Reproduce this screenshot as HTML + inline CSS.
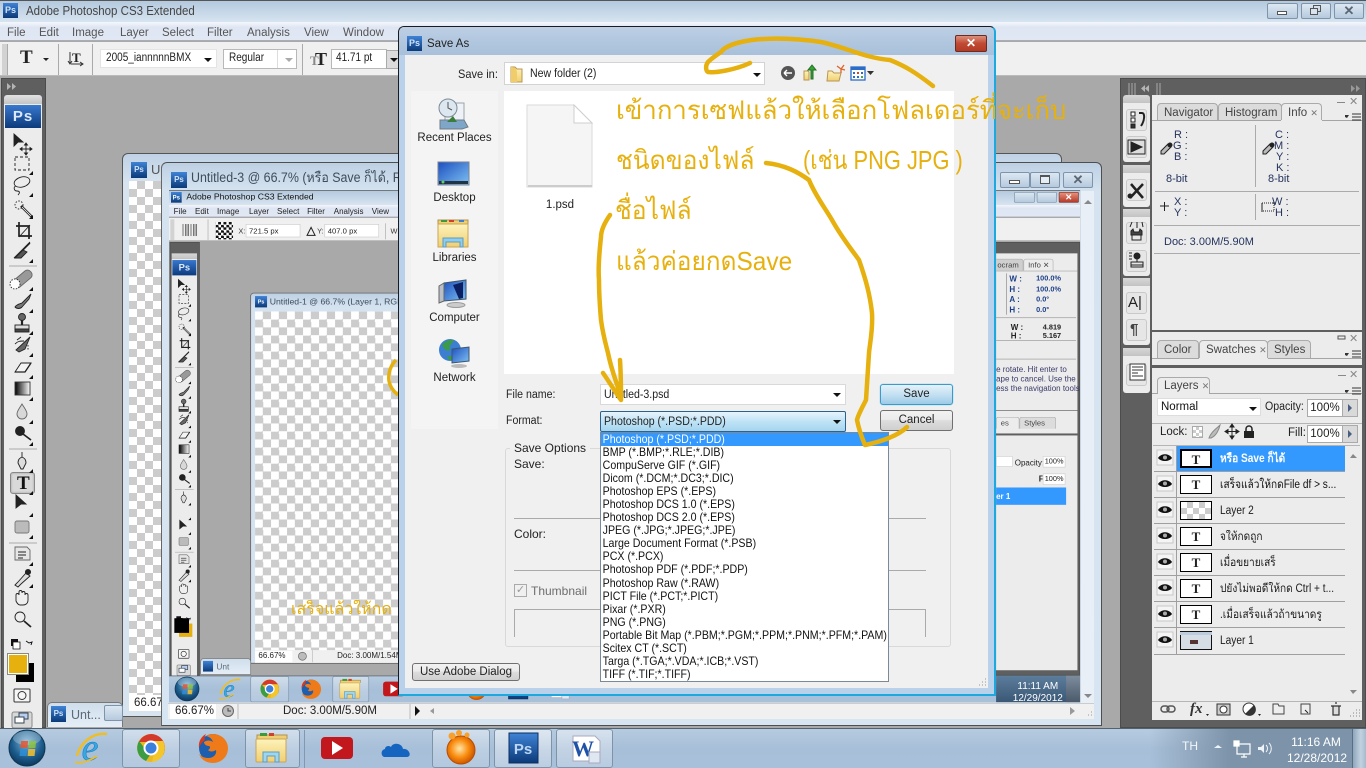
<!DOCTYPE html>
<html lang="en"><head><meta charset="utf-8"><title>Adobe Photoshop CS3 Extended</title>
<style>
*{box-sizing:border-box}
html,body{margin:0;padding:0;width:1366px;height:768px;overflow:hidden;background:#a9a9a9;font:12px/14px "Liberation Sans","Noto Sans CJK SC",sans-serif;color:#222}
.a{position:absolute;white-space:nowrap}
.sx{transform:scaleX(.92);transform-origin:0 50%}
.sy{transform:scaleX(.87);transform-origin:0 50%}
svg.f{position:absolute;left:0;top:0;width:1366px;height:768px;overflow:visible}
.title{left:0;top:0;width:1366px;height:22px;background:linear-gradient(#b4c9de,#d7e4f0);border-top:1px solid #555}
.menu{left:0;top:22px;width:1366px;height:19px;background:linear-gradient(#f4f7fc 0,#dfe6f3 30%,#e1e8f4 100%);border-bottom:1px solid #a9aeb6;color:#555}
.opt{left:0;top:42px;width:1366px;height:34px;background:#f0f0f0;border-bottom:1px solid #bbb}
.wsp{left:0;top:76px;width:1366px;height:652px;background:#a9a9a9}
.inp{background:#fff;border:1px solid #cfcfcf}
.sep{width:1px;background:#aaa}
.tbx{background:linear-gradient(90deg,rgba(125,147,169,0) 1150px,#7d93a9 1230px),linear-gradient(#b6cbe0,#a7bfd8 50%,#a9c0da);left:0;top:728px;width:1366px;height:40px;border-top:1px solid #53626f}
.tbtn{top:729px;height:39px;border:1px solid #7f93a8;border-radius:3px;background:linear-gradient(rgba(255,255,255,.38),rgba(255,255,255,.12))}
.wb{top:3px;height:16px;border:1px solid #7e94aa;border-radius:2px;background:linear-gradient(#dce7f2,#b6cade)}
.dock{left:1120px;top:78px;width:246px;height:650px;background:#5f5f5f;border:1px solid #4c4c4c}
.pan{background:#ececec}
.tab{height:18px;border:1px solid #aaa;border-bottom:0;border-radius:4px 4px 0 0;background:#dcdcdc;color:#444;padding:2px 6px 0;font-size:11.5px}
.tab.on{background:#ececec;color:#444}
.strip{left:1123px;width:27px;background:#ececec;border-radius:0 0 3px 3px}
.grip{left:1123px;width:27px;height:8px;background:linear-gradient(#d7d7d7,#c3c3c3)}
.ibtn{left:1126px;width:21px;height:22px;background:#e6e6e6;border:1px solid #c9c9c9;border-radius:3px}
.row{left:1154px;width:191px;height:26px;border-bottom:1px solid #9f9f9f}
.th{left:1180px;width:32px;height:19px;background:#fff;border:1px solid #000;text-align:center;font:bold 13px/17px "Liberation Serif",serif;color:#222}
.lt{left:1220px;color:#1c1c1c;font-size:11.5px;transform:scaleX(.88);transform-origin:0 50%}
.lab{color:#333;font-size:11px}
.btn{border:1px solid #707070;border-radius:3px;background:linear-gradient(#f2f2f2 0,#ebebeb 45%,#ddd 50%,#cfcfcf 100%);text-align:center;color:#222}
.list div{height:13.05px;line-height:13px;padding-left:3px;font-size:12px;transform:scaleX(.885);transform-origin:0 50%;color:#111}
.yt{color:#e6b00e;font-size:26px;line-height:30px;font-family:"Liberation Sans","DejaVu Sans",sans-serif}
.chk{background-color:#fff;background-image:repeating-conic-gradient(#ccc 0 25%,#fff 0 50%);background-size:16px 16px}
.chki{background-color:#fff;background-image:repeating-conic-gradient(#ccc 0 25%,#fff 0 50%);background-size:24px 24px}
.inf{font:11px/11px "Liberation Sans";color:#24345e}
</style></head><body>

<svg width="0" height="0" style="position:absolute"><defs>
<linearGradient id="psb" x1="0" y1="0" x2="0" y2="1"><stop offset="0" stop-color="#3f83d6"/><stop offset="1" stop-color="#0b3a78"/></linearGradient>
<linearGradient id="fold" x1="0" y1="0" x2="0" y2="1"><stop offset="0" stop-color="#fdf3bb"/><stop offset="1" stop-color="#f0cf72"/></linearGradient>
<linearGradient id="scr" x1="0" y1="0" x2="1" y2="1"><stop offset="0" stop-color="#1c4fc0"/><stop offset="1" stop-color="#7fc2f2"/></linearGradient>
<linearGradient id="gr" x1="0" y1="0" x2="1" y2="0"><stop offset="0" stop-color="#000"/><stop offset="1" stop-color="#fff"/></linearGradient>
<radialGradient id="orb" cx=".5" cy=".35" r=".7"><stop offset="0" stop-color="#7fb5d8"/><stop offset=".6" stop-color="#1c5c8c"/><stop offset="1" stop-color="#0a2f52"/></radialGradient>
<radialGradient id="gom" cx=".45" cy=".45" r=".6"><stop offset="0" stop-color="#ffe6a8"/><stop offset=".55" stop-color="#f98a0c"/><stop offset="1" stop-color="#c14e00"/></radialGradient>

<symbol id="tools" viewBox="0 0 60 768" width="60" height="768">
 <g fill="none" stroke="#222" stroke-width=".9">
  <path d="M14 134v12l4-4h5z" fill="#222"/><path d="M26 144v10M21 149h10" /><path d="M26 143l-1.500 2h3zM26 155l-1.500-2h3zM20 149l2-1.500v3zM32 149l-2-1.500v3z" fill="#111"/>
  <rect x="15" y="157" width="14" height="13" stroke-dasharray="3 2"/>
  <ellipse cx="22" cy="182" rx="8" ry="5" transform="rotate(-15 22 182)"/><path d="M16 186c-3 1-2 5 1 5s3 2 1 4"/>
  <circle cx="19" cy="205" r="4" stroke-dasharray="1.500 1.500"/><path d="M21 206l11 11" stroke-width="2.600"/><path d="M22 207l9 9" stroke="#fff" stroke-width=".8"/>
  <path d="M19 222v14h13M16 226h13v13" stroke-width="1.700"/><path d="M19 237l11-12"/>
  <path d="M15 258l8-8 4 2-6 6z" fill="#555"/><path d="M23 250l7-7" stroke-width="1.300"/><path d="M14 258l16-16"/>
  <path d="M9 266h28" stroke="#aaa"/>
  <g transform="rotate(-40 22 280)"><rect x="12" y="275" width="22" height="9" rx="4" fill="#999" stroke="#666"/></g><circle cx="15" cy="284" r="5" stroke-dasharray="1.400 1.400" fill="#fff"/>
  <path d="M15 307c2-3 5-3 7-4l9-9-2 5-7 8c-2 2-5 2-7 0z" fill="#777"/>
  <circle cx="22" cy="317" r="3.500" fill="#666"/><path d="M22 320v5" stroke-width="2.200"/><rect x="15" y="325" width="14" height="4" fill="#ddd"/><rect x="15" y="329" width="14" height="3" fill="#444"/>
  <path d="M16 350l14-13-5 12-6 3z" fill="#666"/><path d="M17 340l4-3M15 344c3-3 5-3 9-3"/><path d="M28 345v5" stroke-dasharray="1.500 1.500"/>
  <path d="M15 372l6-9h10l-6 9z" fill="#f4f4f4"/><path d="M15 372h10l6-9" stroke-width="1.300"/>
  <rect x="15" y="382" width="15" height="13" fill="url(#gr)" stroke="#333"/>
  <path d="M22 404c-3 5-5 7-5 10a5 5 0 0 0 10 0c0-3-2-5-5-10z" fill="#d8d8d8" stroke="#666"/>
  <circle cx="20" cy="431" r="4.500" fill="#222"/><path d="M23 434l8 6" stroke-width="1.700"/>
  <path d="M9 449h28" stroke="#aaa"/>
  <path d="M22 452v5M18 463c0-4 2-5 4-6 2 1 4 2 4 6l-3 6h-2z" fill="#ddd"/>
  <path d="M16 508l0-13 10 9-5 0z" fill="#222"/>
  <rect x="15" y="521" width="14" height="12" rx="2" fill="#bbb" stroke="#777"/>
  <path d="M9 543h28" stroke="#aaa"/>
  <path d="M15 547h12l3 3v10H15z" fill="#e6e6e6" stroke="#666"/><path d="M18 552h8M18 555h8M18 558h5"/>
  <path d="M15 585l3-3 8-9 4 3-9 8-3 3z" fill="#ddd"/><circle cx="28" cy="572" r="2.600" fill="#222"/>
  <path d="M16 601v-6c0-2 3-2 3 0v-3c0-2 3-2 3 0v1c0-2 3-2 3 0v2c0-2 3-2 3 0v5c0 4-3 5-5 5h-3c-2 0-3-2-4-4z" fill="#eee"/>
  <circle cx="20" cy="617" r="5" fill="#eee"/><path d="M24 621l7 6" stroke-width="1.800"/>
 </g>
 <g fill="#111"><path d="M33 171v4h-4z"/><path d="M33 193v4h-4z"/><path d="M33 215v4h-4z"/><path d="M33 259v4h-4z"/><path d="M33 287v4h-4z"/><path d="M33 309v4h-4z"/><path d="M33 331v4h-4z"/><path d="M33 353v4h-4z"/><path d="M33 375v4h-4z"/><path d="M33 397v4h-4z"/><path d="M33 420v4h-4z"/><path d="M33 442v4h-4z"/><path d="M33 469v4h-4z"/><path d="M33 491v4h-4z"/><path d="M33 513v4h-4z"/><path d="M33 535v4h-4z"/><path d="M33 562v4h-4z"/><path d="M33 584v4h-4z"/></g>
 <g fill="#111"><path d="M11 639h7v7h-7z"/><path d="M13 642h7v7h-7z" fill="#fff" stroke="#111" stroke-width=".8"/><path d="M26 641l3 2 3-1-1 3" fill="none" stroke="#111"/></g>
 <rect x="14" y="689" width="16" height="13" rx="1" fill="#f6f6f6" stroke="#333"/><circle cx="22" cy="695.500" r="4" fill="none" stroke="#333"/>
 <rect x="12" y="712" width="20" height="16" rx="2" fill="#d8d8d8" stroke="#888"/><rect x="19" y="713" width="9" height="6" fill="#b8cff0" stroke="#345"/><rect x="15" y="717" width="9" height="6" fill="#fff" stroke="#345"/>
</symbol>

<symbol id="task" viewBox="0 0 660 768" width="660" height="768">
 <circle cx="27" cy="748" r="18" fill="url(#orb)" stroke="#0e3552"/><ellipse cx="27" cy="738" rx="14" ry="7" fill="#fff" opacity=".25"/>
 <g transform="skewX(-6) translate(78 0)" opacity=".85"><rect x="21" y="741" width="7" height="7" fill="#e8552d"/><rect x="29" y="741" width="7" height="7" fill="#8cc63f"/><rect x="21" y="749" width="7" height="7" fill="#2d8fd8"/><rect x="29" y="749" width="7" height="7" fill="#f6c22a"/></g>
 <text x="90" y="760" font-family="Liberation Serif" font-style="italic" font-size="38" text-anchor="middle" fill="#3aa8e0" stroke="#1c7fc2" stroke-width=".6">e</text>
 <path d="M77 756c3-13 16-24 30-22" fill="none" stroke="#efbe25" stroke-width="2.400"/><path d="M75 762c6 2 14-1 22-6" fill="none" stroke="#efbe25" stroke-width="1.800"/>
 <circle cx="151" cy="748" r="14" fill="#e8b923"/><path d="M151 734a14 14 0 0 1 12.100 21l-6-10.500-6-2.500H138.900A14 14 0 0 1 151 734z" fill="#d33a2c"/>
 <path d="M139 741a14 14 0 0 0 7 20l6-9-6-2z" fill="#3b9c43"/><path d="M163 741h-12l4 6-3 15a14 14 0 0 0 11-21z" fill="#f3c62c"/>
 <circle cx="151" cy="748" r="6.500" fill="#3a7fdc" stroke="#fff" stroke-width="2"/>
 <circle cx="213" cy="748" r="14" fill="#1d5fae"/><path d="M213 734c9 0 15 7 15 14 0 9-7 15-15 15-7 0-13-4-14-10 1 3 5 5 9 5 6 0 9-4 8-8-3 2-6 2-8 0 2-1 3-3 1-4-3 0-5-2-5-4 3-2 6-2 9 0-1-3-3-5-7-6 2-1 5-2 7-2z" fill="#ef7a1a"/><path d="M199 748c-1-7 3-12 7-14-1 2-2 4-1 6-3 2-5 5-6 8z" fill="#d9391b"/>
 <path d="M257 739v-4h30v4" fill="#f0cf72" stroke="#b09050"/><rect x="260" y="733" width="7" height="3" fill="#3c9a3a"/><rect x="269" y="733" width="5" height="3" fill="#d0402a"/>
 <rect x="256" y="739" width="30" height="23" rx="1" fill="url(#fold)" stroke="#c9a558"/><path d="M263 762v-10h16v10h-4v-6h-8v6z" fill="#9fd6ef" stroke="#5f9cc0"/>
 <rect x="321" y="737" width="32" height="22" rx="4" fill="#c2171c"/><path d="M332 741v14l11-7z" fill="#fff"/>
 <path d="M385 757c-4 0-5-7 0-8 0-3 4-4 6-2 2-5 11-4 12 2 6-1 10 8 3 8z" fill="#1464c0"/>
 <circle cx="461" cy="750" r="14" fill="url(#gom)" stroke="#b94d00"/><circle cx="452" cy="736" r="3.500" fill="#f9a02a"/><circle cx="459" cy="733" r="3" fill="#f9a02a"/><circle cx="467" cy="735" r="2.500" fill="#f9a02a"/>
 <rect x="509" y="733" width="29" height="30" fill="url(#psb)" stroke="#0c2f60"/>
 <text x="523" y="754" font-family="Liberation Sans" font-weight="bold" font-size="15" fill="#bcd6f4" text-anchor="middle">Ps</text>
 <path d="M573 736h22l5 5v20h-27z" fill="#fff" stroke="#aab"/><text x="583" y="756" font-family="Liberation Serif" font-weight="bold" font-size="22" fill="#1f52a8" text-anchor="middle">W</text><path d="M589 752h11v11h-11z" fill="#dfe7f2" stroke="#aab"/>
</symbol>
</defs></svg>

<!-- MAIN APP -->
<div class="a title"></div>
<div class="a" style="left:3px;top:3px;width:15px;height:15px;background:linear-gradient(#3f83d6,#0b3a78);color:#cfe2f8;font:bold 9px/15px 'Liberation Sans';text-align:center">Ps</div>
<div class="a sx" style="left:26px;top:4px;color:#444;font-size:12.5px">Adobe Photoshop CS3 Extended</div>
<div class="a wb" style="left:1267px;width:31px"></div><div class="a" style="left:1277px;top:11px;width:10px;height:4px;border:1px solid #555;background:#fff"></div>
<div class="a wb" style="left:1301px;width:30px"></div><div class="a" style="left:1313px;top:5px;width:8px;height:7px;border:1px solid #555"></div><div class="a" style="left:1310px;top:8px;width:8px;height:7px;border:1px solid #555;background:#d8e3ef"></div>
<div class="a wb" style="left:1334px;width:30px;text-align:center;font:bold 13px/13px 'Liberation Sans';color:#5b6673">✕</div>

<div class="a menu"></div>
<div class="a" style="left:7px;top:26px;color:#555;font-size:11.5px">File</div>
<div class="a" style="left:39px;top:26px;color:#555;font-size:11.5px">Edit</div>
<div class="a" style="left:72px;top:26px;color:#555;font-size:11.5px">Image</div>
<div class="a" style="left:120px;top:26px;color:#555;font-size:11.5px">Layer</div>
<div class="a" style="left:162px;top:26px;color:#555;font-size:11.5px">Select</div>
<div class="a" style="left:207px;top:26px;color:#555;font-size:11.5px">Filter</div>
<div class="a" style="left:247px;top:26px;color:#555;font-size:11.5px">Analysis</div>
<div class="a" style="left:304px;top:26px;color:#555;font-size:11.5px">View</div>
<div class="a" style="left:343px;top:26px;color:#555;font-size:11.5px">Window</div>

<div class="a opt"></div>
<div class="a" style="left:2px;top:44px;width:6px;height:31px;background:#d2d2d2;border-right:1px solid #aaa"></div>
<div class="a" style="left:20px;top:46px;font:bold 19px/24px 'Liberation Serif',serif;color:#222">T</div>
<div class="a" style="left:43px;top:58px;border:3px solid transparent;border-top:3px solid #222"></div>
<div class="a sep" style="left:58px;top:44px;height:31px"></div>
<div class="a" style="left:72px;top:51px;font:bold 13px/14px 'Liberation Serif',serif;color:#222">T</div>
<svg class="f"><path d="M70 52v12M68 61l2 3 2-3M71 64h12M80 62l3 2-3 2" fill="none" stroke="#333"/></svg>
<div class="a sep" style="left:92px;top:44px;height:31px"></div>
<div class="a inp" style="left:100px;top:49px;width:117px;height:19px;border-color:#e4e4e4"></div>
<div class="a sy" style="left:106px;top:51px;font-size:11.5px;color:#222">2005_iannnnnBMX</div>
<div class="a" style="left:204px;top:58px;border:4px solid transparent;border-top:4px solid #111"></div>
<div class="a inp" style="left:223px;top:49px;width:74px;height:20px;border-color:#b8b8b8"></div>
<div class="a sy" style="left:229px;top:51px;font-size:11.5px;color:#222">Regular</div>
<div class="a" style="left:277px;top:50px;width:1px;height:18px;background:#ddd"></div>
<div class="a" style="left:285px;top:58px;border:4px solid transparent;border-top:4px solid #aaa"></div>
<div class="a sep" style="left:302px;top:44px;height:31px"></div>
<div class="a" style="left:310px;top:53px;font:bold 13px/16px 'Liberation Serif',serif;color:#888">T</div>
<div class="a" style="left:315px;top:48px;font:bold 18px/22px 'Liberation Serif',serif;color:#222">T</div>
<div class="a inp" style="left:331px;top:49px;width:56px;height:20px;border-color:#b8b8b8"></div>
<div class="a sy" style="left:336px;top:51px;font-size:11.5px">41.71 pt</div>
<div class="a" style="left:386px;top:50px;width:14px;height:19px;background:#dcdcdc;border:1px solid #aaa"></div>
<div class="a" style="left:390px;top:58px;border:4px solid transparent;border-top:4px solid #111"></div>

<div class="a wsp"></div>

<!-- window 1 behind -->
<div class="a" style="left:122px;top:153px;width:940px;height:564px;background:linear-gradient(#bfd2e4,#d7e4f0 30px);border:1px solid #555;border-radius:6px 6px 0 0"></div>
<div class="a" style="left:131px;top:162px;width:16px;height:16px;background:linear-gradient(#3f83d6,#0b3a78);color:#cfe2f8;font:bold 8px/16px 'Liberation Sans';text-align:center">Ps</div>
<div class="a" style="left:151px;top:163px;font-size:13px;color:#555">Un</div>
<div class="a chk" style="left:129px;top:181px;width:40px;height:514px"></div>
<div class="a" style="left:129px;top:695px;width:40px;height:16px;background:#fff;padding:1px 5px;font-size:11.5px;color:#222">66.67</div>
<!-- minimized tab -->
<div class="a" style="left:47px;top:702px;width:76px;height:25px;background:linear-gradient(#cfdeec,#e5eef6);border:1px solid #777;border-bottom:0;border-radius:5px 5px 0 0"></div>
<div class="a" style="left:51px;top:706px;width:15px;height:16px;background:linear-gradient(#3f83d6,#0b3a78);color:#cfe2f8;font:bold 8px/16px 'Liberation Sans';text-align:center">Ps</div>
<div class="a" style="left:71px;top:708px;color:#5a6a7a;font-size:12.5px">Unt...</div>
<div class="a wb" style="left:104px;top:705px;width:19px;height:16px"></div>

<!-- window 2 -->
<div class="a" style="left:161px;top:162px;width:941px;height:564px;background:linear-gradient(#bdd0e3,#d5e3f0 28px,#d7e4f1);border:1px solid #4e4e4e;border-radius:6px 6px 0 0;border-left-color:#666"></div>
<div class="a" style="left:171px;top:172px;width:16px;height:16px;background:linear-gradient(#3f83d6,#0b3a78);color:#cfe2f8;font:bold 8px/16px 'Liberation Sans';text-align:center">Ps</div>
<div class="a sx" style="left:191px;top:171px;font-size:13.5px;color:#3f4d5b">Untitled-3 @ 66.7% (หรือ Save ก็ได้, RGB/8)</div>
<div class="a wb" style="left:1000px;top:172px;width:30px;height:16px"></div><div class="a" style="left:1009px;top:180px;width:11px;height:4px;border:1px solid #555;background:#fff"></div>
<div class="a wb" style="left:1030px;top:172px;width:30px;height:16px"></div><div class="a" style="left:1040px;top:175px;width:10px;height:9px;border:1px solid #555;border-top-width:2px;background:#e4eef7"></div>
<div class="a wb" style="left:1063px;top:172px;width:30px;height:16px;text-align:center;font:bold 13px/13px 'Liberation Sans';color:#5b6673">✕</div>
<!-- scrollbar/status -->
<div class="a" style="left:1081px;top:191px;width:13px;height:512px;background:#e9eff6"></div>
<div class="a" style="left:1084px;top:196px;border:4px solid transparent;border-bottom:4px solid #888"></div>
<div class="a" style="left:1084px;top:694px;border:4px solid transparent;border-top:4px solid #888"></div>
<div class="a" style="left:168px;top:703px;width:926px;height:16px;background:#f0f0f0;border-top:1px solid #ccc"></div>
<div class="a" style="left:170px;top:704px;width:46px;height:15px;background:#fff;font-size:11.5px;padding-left:5px">66.67%</div>
<svg class="f"><circle cx="228" cy="711" r="5.500" fill="#bbb" stroke="#666"/><path d="M228 708v3h3" fill="none" stroke="#444"/><path d="M238 704v15M410 704v15" stroke="#bbb"/><path d="M415 706v10l5-5z" fill="#111"/><path d="M434 708v6l-4-3z" fill="#999"/><path d="M1070 707v8l5-4z" fill="#999"/><path d="M1088 715h1M1091 715h1M1091 712h1" stroke="#999"/></svg>
<div class="a" style="left:283px;top:704px;font-size:11.5px">Doc: 3.00M/5.90M</div>

<!-- inner screenshot -->
<div class="a" style="left:168.600px;top:190.300px;width:1366px;height:768px;transform:scale(.667);transform-origin:0 0;overflow:hidden;background:#a9a9a9">
 <div class="a title"></div>
 <div class="a" style="left:3px;top:3px;width:16px;height:16px;background:linear-gradient(#3f83d6,#0b3a78);color:#fff;font:bold 9px/16px 'Liberation Sans';text-align:center">Ps</div>
 <div class="a" style="left:26px;top:3px;font-size:13px;color:#111">Adobe Photoshop CS3 Extended</div>
 <div class="a wb" style="left:1267px;width:31px"></div><div class="a wb" style="left:1301px;width:30px"></div>
 <div class="a wb" style="left:1334px;width:30px;background:linear-gradient(#e8917b,#b53a2a);border-color:#7a2a20;color:#fff;text-align:center;font:bold 13px/13px 'Liberation Sans'">✕</div>
 <div class="a menu"></div>
 <div class="a" style="left:7px;top:25px;color:#222">File</div><div class="a" style="left:39px;top:25px;color:#222">Edit</div><div class="a" style="left:72px;top:25px;color:#222">Image</div><div class="a" style="left:120px;top:25px;color:#222">Layer</div><div class="a" style="left:162px;top:25px;color:#222">Select</div><div class="a" style="left:207px;top:25px;color:#222">Filter</div><div class="a" style="left:247px;top:25px;color:#222">Analysis</div><div class="a" style="left:304px;top:25px;color:#222">View</div>
 <div class="a opt"></div>
 <div class="a" style="left:2px;top:44px;width:6px;height:31px;background:#d2d2d2"></div>
 <div class="a" style="left:20px;top:51px;width:24px;height:18px;background:repeating-linear-gradient(90deg,#777 0 2px,#eee 2px 4px)"></div>
 <div class="a sep" style="left:58px;top:44px;height:31px"></div>
 <div class="a" style="left:70px;top:48px;width:26px;height:26px;background:repeating-conic-gradient(#111 0 25%,#fff 0 50%) 0 0/8px 8px"></div>
 <div class="a lab" style="left:104px;top:55px;font-size:11px">X:</div>
 <div class="a inp" style="left:115px;top:51px;width:82px;height:20px;padding:3px 4px;border-color:#ccc;font-size:11.5px">721.5 px</div>
 <svg class="f"><path d="M207 68l6-12 6 12z" fill="none" stroke="#222" stroke-width="1.500"/></svg>
 <div class="a lab" style="left:222px;top:55px">Y:</div>
 <div class="a inp" style="left:233px;top:51px;width:82px;height:20px;padding:3px 4px;border-color:#ccc;font-size:11.5px">407.0 px</div>
 <div class="a sep" style="left:324px;top:50px;height:24px"></div>
 <div class="a lab" style="left:332px;top:55px">W:</div>
 <!-- doc -->
 <div class="a" style="left:122px;top:154px;width:1140px;height:556px;background:linear-gradient(#bdd0e3,#d5e3f0 20px);border:1px solid #555;border-radius:5px 5px 0 0"></div>
 <div class="a" style="left:129px;top:159px;width:18px;height:17px;background:linear-gradient(#3f83d6,#0b3a78);color:#fff;font:bold 8px/17px 'Liberation Sans';text-align:center">Ps</div>
 <div class="a" style="left:151px;top:161px;font-size:13px;color:#3f4d5b">Untitled-1 @ 66.7% (Layer 1, RGB/8)</div>
 <div class="a chki" style="left:129px;top:182px;width:1100px;height:508px"></div>
 <div class="a" style="left:129px;top:690px;width:1100px;height:19px;background:#f0f0f0"></div>
 <div class="a" style="left:129px;top:691px;width:56px;height:17px;background:#fff;padding-left:5px;font-size:12px">66.67%</div>
 <div class="a" style="left:252px;top:691px;font-size:12px">Doc: 3.00M/1.54M</div>
 <svg class="f"><circle cx="200" cy="699" r="6" fill="#bbb" stroke="#666"/><path d="M215 690v18" stroke="#bbb"/></svg>
 <div class="a" style="left:47px;top:702px;width:76px;height:25px;background:linear-gradient(#cfdeec,#e5eef6);border:1px solid #777;border-radius:5px 5px 0 0"></div>
 <div class="a" style="left:51px;top:706px;width:15px;height:16px;background:linear-gradient(#3f83d6,#0b3a78)"></div>
 <div class="a" style="left:71px;top:708px;color:#5a6a7a;font-size:12.5px">Unt</div>
 <!-- inner toolbar -->
 <div class="a" style="left:1px;top:78px;width:45px;height:650px;background:#5f5f5f;border:1px solid #4c4c4c"></div>
 <div class="a" style="left:4px;top:95px;width:38px;height:8px;background:linear-gradient(#d7d7d7,#c3c3c3)"></div>
 <div class="a" style="left:4px;top:103px;width:38px;height:625px;background:#ececec"></div>
 <div class="a" style="left:5px;top:105px;width:36px;height:23px;background:linear-gradient(#3878ce,#0c3a7c);color:#dbe9fa;font:bold 14px/23px 'Liberation Sans';text-align:center">Ps</div>
 <svg class="f"><use href="#tools" x="0" y="0"/></svg>
 <div class="a" style="left:15px;top:650px;width:20px;height:20px;background:#e6b00e"></div>
 <div class="a" style="left:8px;top:642px;width:22px;height:22px;background:#000"></div>
 <!-- inner dock right side -->
 <div class="a dock"></div>
 <div class="a pan" style="left:1240px;top:95px;width:122px;height:235px"></div>
 <div class="a tab" style="left:1225px;top:103px;width:56px;background:#cfcfcf;padding-left:16px">ocram</div>
 <div class="a tab on" style="left:1281px;top:103px;width:45px;border-color:#aaa">Info ✕</div>
 <div class="a" style="left:1240px;top:121px;width:122px;height:1px;background:#aaa"></div>
 <div class="a" style="left:1255px;top:125px;width:1px;height:62px;background:#888"></div>
 <div class="a" style="left:1240px;top:191px;width:120px;height:1px;background:#999"></div>
 <div class="a" style="left:1240px;top:225px;width:120px;height:1px;background:#999"></div>
 <div class="a" style="left:1240px;top:253px;width:120px;height:1px;background:#999"></div>
 <div class="a" style="left:1260px;top:126px;font:bold 12px/15.500px 'Liberation Sans';color:#1c3f8a">W :<br>H :<br>A :<br>H :</div>
 <div class="a" style="left:1300px;top:126px;font:bold 11px/15.500px 'Liberation Sans';color:#1c3f8a">100.0%<br>100.0%<br>0.0°<br>0.0°</div>
 <div class="a" style="left:1262px;top:200px;font:bold 12px/13px 'Liberation Sans';color:#222">W :<br>H :</div>
 <div class="a" style="left:1310px;top:200px;font:bold 11px/13px 'Liberation Sans';color:#222">4.819<br>5.167</div>
 <div class="a" style="left:1240px;top:262px;font-size:12px;line-height:14px;color:#3a3a6a">e rotate. Hit enter to<br>ape to cancel. Use the<br>ess the navigation tools.</div>
 <div class="a pan" style="left:1240px;top:331px;width:122px;height:34px"></div>
 <div class="a tab" style="left:1240px;top:340px;width:35px;background:#ececec">es</div>
 <div class="a tab" style="left:1275px;top:340px;width:55px">Styles</div>
 <div class="a pan" style="left:1240px;top:368px;width:122px;height:352px"></div>
 <div class="a inp" style="left:1240px;top:399px;width:25px;height:16px"></div>
 <div class="a" style="left:1268px;top:402px;font-size:12px">Opacity:</div>
 <div class="a inp" style="left:1310px;top:399px;width:34px;height:17px;font-size:11px;text-align:center">100%</div>
 <div class="a" style="left:1304px;top:426px;font-size:12px;font-weight:bold">Fill:</div>
 <div class="a inp" style="left:1310px;top:425px;width:34px;height:17px;font-size:11px;text-align:center">100%</div>
 <div class="a" style="left:1240px;top:446px;width:105px;height:26px;background:#3399ff;color:#fff;font:bold 12px/26px 'Liberation Sans'">er 1</div>
 <!-- inner taskbar -->
 <div class="a tbx" style="background:linear-gradient(#b6cbe0,#a7bfd8 50%,#a9c0da)"></div>
 <div class="a tbtn" style="left:122px;width:58px"></div><div class="a tbtn" style="left:245px;width:55px"></div>
 <svg class="f"><use href="#task" x="0" y="0"/></svg>
 <div class="a" style="left:1240px;top:728px;width:126px;height:40px;background:linear-gradient(#5d7d9c,#3a5876)"></div>
 <div class="a" style="left:1265px;top:735px;color:#fff;font-size:15px;line-height:18px;text-align:center">11:11 AM<br>12/29/2012</div>
 <div class="a" style="left:1345px;top:728px;width:21px;height:40px;background:linear-gradient(#7d8d9d,#4a5a6a)"></div>
</div>
<!-- yellow bits on inner doc -->
<svg class="f"><path d="M396 360c-6 6-8 14-7 21 1 6 4 10 9 14" fill="none" stroke="#e6b00e" stroke-width="3.500"/></svg>
<div class="a" style="left:291px;top:600px;width:106px;overflow:hidden;color:#e6b00e;font-size:16px;line-height:20px">เสร็จแล้วให้กด</div>

<!-- toolbar -->
<div class="a" style="left:1px;top:78px;width:45px;height:650px;background:#5f5f5f;border:1px solid #4c4c4c"></div>
<svg class="f"><path d="M7 83v7l4-3.500zM12 83v7l4-3.500z" fill="#b4b4b4"/></svg>
<div class="a" style="left:4px;top:95px;width:38px;height:9px;background:linear-gradient(#e2e2e2,#c4c4c4);border-radius:3px 3px 0 0"></div>
<div class="a" style="left:4px;top:104px;width:38px;height:624px;background:#ececec"></div>
<div class="a" style="left:5px;top:105px;width:36px;height:23px;background:linear-gradient(#3878ce,#0c3a7c);color:#dbe9fa;font:bold 15px/23px 'Liberation Sans';text-align:center;letter-spacing:1px">Ps</div>
<div class="a" style="left:10px;top:472px;width:25px;height:22px;background:#d9d9d9;border:1px solid #888;border-radius:3px;box-shadow:inset 0 0 2px #999"></div>
<svg class="f"><use href="#tools" x="0" y="0"/></svg>
<div class="a" style="left:17px;top:473px;font:bold 19px/21px 'Liberation Serif',serif;color:#111">T</div>
<div class="a" style="left:16px;top:663px;width:18px;height:19px;background:#000"></div>
<div class="a" style="left:8px;top:654px;width:20px;height:20px;background:#e6b00e;border:1px solid #fff;outline:1px solid #888"></div>

<!-- right dock -->
<div class="a dock"></div>
<svg class="f"><path d="M1129 83v12M1132 83v12M1135 83v12M1157 83v12M1160 83v12" stroke="#aaa" stroke-width="1"/><path d="M1145 85v7l-4-3.500zM1149 85v7l-4-3.500z" fill="#b4b4b4"/><path d="M1351 85v7l4-3.500zM1356 85v7l4-3.500z" fill="#999"/></svg>
<div class="a grip" style="top:95px;border-radius:3px 3px 0 0"></div><div class="a strip" style="top:103px;height:59px"></div>
<div class="a grip" style="top:165px"></div><div class="a strip" style="top:173px;height:34px"></div>
<div class="a grip" style="top:209px"></div><div class="a strip" style="top:217px;height:59px"></div>
<div class="a grip" style="top:278px"></div><div class="a strip" style="top:286px;height:59px"></div>
<div class="a grip" style="top:348px"></div><div class="a strip" style="top:356px;height:37px"></div>
<div class="a ibtn" style="top:109px"></div><div class="a ibtn" style="top:136px"></div><div class="a ibtn" style="top:179px"></div><div class="a ibtn" style="top:222px"></div><div class="a ibtn" style="top:250px"></div><div class="a ibtn" style="top:292px"></div><div class="a ibtn" style="top:319px"></div><div class="a ibtn" style="top:364px"></div>
<svg class="f">
 <g fill="none" stroke="#222"><rect x="1131" y="112" width="4" height="4" fill="#fff"/><rect x="1131" y="118" width="4" height="4" fill="#fff"/><rect x="1131" y="124" width="4" height="4" fill="#333"/><path d="M1139 113h3c3 0 3 7-1 13" stroke-width="2"/>
 <rect x="1128" y="140" width="17" height="14" fill="#ddd"/><path d="M1131 142l11 5-11 5z" fill="#222"/>
 <path d="M1130 198l13-14M1143 198l-12-14" stroke-width="2.500"/><circle cx="1130" cy="196" r="2" fill="#222"/>
 <path d="M1131 235h11v-4l-2-2-1 3h-5l-1-3-2 2zM1130 227l2-5M1137 228v-6M1143 227l-1-5" fill="#444"/><rect x="1132" y="235" width="9" height="5"/>
 <circle cx="1137" cy="256" r="3" fill="#222"/><path d="M1137 259v3M1131 262h12v3h-12zM1131 265h12v2h-12zM1129 253h3M1129 256h3M1129 259h3"/>
 <rect x="1130" y="364" width="15" height="16" fill="#fff" stroke="#333"/><path d="M1132 367h11M1132 370h11M1132 373h6M1132 376h11" stroke="#333"/></g>
</svg>
<div class="a" style="left:1128px;top:293px;font:15px/20px 'Liberation Sans';color:#222">A|</div>
<div class="a" style="left:1130px;top:320px;font:bold 15px/20px 'Liberation Sans';color:#444">¶</div>

<div class="a pan" style="left:1152px;top:95px;width:210px;height:235px"></div>
<div class="a" style="left:1337px;top:102px;width:8px;height:1px;background:#888"></div>
<div class="a" style="left:1349px;top:95px;color:#888;font-size:11px">✕</div>
<div class="a tab" style="left:1157px;top:103px;width:61px">Navigator</div>
<div class="a tab" style="left:1218px;top:103px;width:64px">Histogram</div>
<div class="a tab on" style="left:1281px;top:103px;width:41px;padding-right:0">Info <span style="color:#777;font-size:9px">✕</span></div>
<div class="a" style="left:1152px;top:120px;width:210px;height:1px;background:#a5a5a5"></div>
<div class="a" style="left:1281px;top:120px;width:41px;height:2px;background:#ececec"></div>
<svg class="f"><path d="M1345 117v-2h4l-2 3z" fill="#333"/><path d="M1352 114h9M1352 117h9M1352 120h9" stroke="#333"/>
 <g fill="none" stroke="#222"><path d="M1161 151l7-7 3 3-7 7h-3z" fill="#bbb"/><circle cx="1170" cy="145" r="2" fill="#222"/><path d="M1263 151l7-7 3 3-7 7h-3z" fill="#bbb"/><circle cx="1272" cy="145" r="2" fill="#222"/><path d="M1160 206h9M1164.500 202v9"/><path d="M1262 203h12v8h-12z" stroke-dasharray="1 1"/><path d="M1262 203v9M1272 203h4"/></g></svg>
<div class="a" style="left:1255px;top:125px;width:1px;height:62px;background:#aaa"></div>
<div class="a" style="left:1155px;top:191px;width:204px;height:1px;background:#ababab"></div>
<div class="a" style="left:1255px;top:194px;width:1px;height:26px;background:#aaa"></div>
<div class="a" style="left:1154px;top:225px;width:206px;height:1px;background:#ababab"></div>
<div class="a" style="left:1154px;top:253px;width:206px;height:1px;background:#ababab"></div>
<div class="a inf" style="left:1174px;top:130px">R :</div>
<div class="a inf" style="left:1173px;top:141px">G :</div>
<div class="a inf" style="left:1174px;top:152px">B :</div>
<div class="a inf" style="left:1275px;top:130px">C :</div>
<div class="a inf" style="left:1274px;top:141px">M :</div>
<div class="a inf" style="left:1276px;top:152px">Y :</div>
<div class="a inf" style="left:1276px;top:163px">K :</div>
<div class="a inf" style="left:1166px;top:174px">8-bit</div>
<div class="a inf" style="left:1268px;top:174px">8-bit</div>
<div class="a inf" style="left:1174px;top:197px">X :</div>
<div class="a inf" style="left:1174px;top:208px">Y :</div>
<div class="a inf" style="left:1272px;top:197px">W :</div>
<div class="a inf" style="left:1275px;top:208px">H :</div>
<div class="a inf" style="left:1164px;top:237px">Doc: 3.00M/5.90M</div>

<div class="a pan" style="left:1152px;top:332px;width:210px;height:33px"></div>
<div class="a tab" style="left:1157px;top:340px;width:42px">Color</div>
<div class="a tab on" style="left:1199px;top:340px;width:69px;padding-right:0">Swatches <span style="color:#777;font-size:9px">✕</span></div>
<div class="a tab" style="left:1267px;top:340px;width:44px">Styles</div>
<div class="a" style="left:1152px;top:358px;width:210px;height:1px;background:#a5a5a5"></div>
<div class="a" style="left:1199px;top:358px;width:69px;height:2px;background:#ececec"></div>
<svg class="f"><path d="M1338 336h7v3h-7z" fill="none" stroke="#555"/><path d="M1345 355v-2h4l-2 3z" fill="#333"/><path d="M1352 351h9M1352 354h9M1352 357h9" stroke="#333"/></svg>
<div class="a" style="left:1349px;top:332px;color:#888;font-size:11px">✕</div>

<div class="a pan" style="left:1152px;top:368px;width:210px;height:352px"></div>
<div class="a" style="left:1338px;top:375px;width:8px;height:1px;background:#888"></div>
<div class="a" style="left:1349px;top:368px;color:#888;font-size:11px">✕</div>
<div class="a tab on" style="left:1157px;top:377px;width:53px;height:17px;padding-right:0;padding-top:1px">Layers <span style="color:#777;font-size:9px">✕</span></div>
<div class="a" style="left:1152px;top:393px;width:210px;height:1px;background:#a5a5a5"></div>
<div class="a" style="left:1158px;top:393px;width:51px;height:2px;background:#ececec"></div>
<svg class="f"><path d="M1345 392v-2h4l-2 3z" fill="#333"/><path d="M1352 388h9M1352 391h9M1352 394h9" stroke="#333"/></svg>
<div class="a inp" style="left:1157px;top:398px;width:104px;height:18px;border-color:#ddd;padding:1px 3px;font-size:11.5px;color:#111">Normal</div>
<div class="a" style="left:1249px;top:407px;border:4px solid transparent;border-top:4px solid #111"></div>
<div class="a sx" style="left:1265px;top:400px;font-size:11.5px;color:#222">Opacity:</div>
<div class="a inp" style="left:1307px;top:399px;width:36px;height:18px;border-color:#aaa;text-align:center;font-size:11.5px;color:#222;padding-top:1px">100%</div>
<div class="a" style="left:1342px;top:399px;width:16px;height:18px;background:#d9d9d9;border:1px solid #aaa"></div>
<div class="a" style="left:1348px;top:404px;border:4px solid transparent;border-left:4px solid #4a5f80;border-right:0"></div>
<div class="a" style="left:1152px;top:423px;width:210px;height:1px;background:#b5b5b5"></div>
<div class="a" style="left:1160px;top:425px;font-size:11.5px;color:#222">Lock:</div>
<div class="a" style="left:1192px;top:426px;width:11px;height:12px;background:repeating-conic-gradient(#ccc 0 25%,#fff 0 50%) 0 0/6px 6px;border:1px solid #aaa"></div>
<svg class="f"><path d="M1209 438c2-6 7-9 11-13-1 5-4 11-9 13z" fill="#bbb" stroke="#888"/><path d="M1232 425v13M1225.500 431.500h13M1232 424l-2 3h4zM1232 439l-2-3h4zM1225 431.500l3-2v4zM1239 431.500l-3-2v4z" fill="#222" stroke="#222"/><rect x="1244" y="431" width="10" height="7" fill="#222"/><path d="M1246 431v-2c0-4 6-4 6 0v2" fill="none" stroke="#222" stroke-width="1.500"/></svg>
<div class="a" style="left:1288px;top:426px;font-size:11.5px;color:#222">Fill:</div>
<div class="a inp" style="left:1307px;top:425px;width:36px;height:18px;border-color:#aaa;text-align:center;font-size:11.5px;color:#222;padding-top:1px">100%</div>
<div class="a" style="left:1342px;top:425px;width:16px;height:18px;background:#d9d9d9;border:1px solid #aaa"></div>
<div class="a" style="left:1348px;top:430px;border:4px solid transparent;border-left:4px solid #4a5f80;border-right:0"></div>
<div class="a" style="left:1153px;top:445px;width:207px;height:1px;background:#b5b5b5"></div>

<div class="a" style="left:1177px;top:446px;width:168px;height:26px;background:#3399ff"></div>
<div class="a row" style="top:446px"></div><div class="a row" style="top:472px"></div><div class="a row" style="top:498px"></div><div class="a row" style="top:524px"></div><div class="a row" style="top:550px"></div><div class="a row" style="top:576px"></div><div class="a row" style="top:602px"></div><div class="a row" style="top:628px;height:27px"></div>
<div class="a" style="left:1176px;top:446px;width:1px;height:209px;background:#9f9f9f"></div>
<svg class="f"><defs><g id="ey"><rect x="1157" y="-8" width="16" height="15" fill="#f5f5f5" stroke="#c8c8c8"/><path d="M1158 0c3-5 11-5 14 0-3 4-11 4-14 0z" fill="#111"/><circle cx="1165" cy="-.5" r="2" fill="#aaa"/></g></defs>
 <use href="#ey" y="458"/><use href="#ey" y="484"/><use href="#ey" y="510"/><use href="#ey" y="536"/><use href="#ey" y="562"/><use href="#ey" y="588"/><use href="#ey" y="614"/><use href="#ey" y="640"/>
 <path d="M1350 458l3-4 4 4z" fill="#888"/><path d="M1350 690l3 4 4-4z" fill="#888"/></svg>
<div class="a th" style="top:449px;border:2px solid #000">T</div>
<div class="a th" style="top:475px">T</div>
<div class="a" style="left:1180px;top:501px;width:32px;height:19px;border:1px solid #000;background:repeating-conic-gradient(#ccc 0 25%,#fff 0 50%) 0 0/12px 12px"></div>
<div class="a th" style="top:527px">T</div><div class="a th" style="top:553px">T</div><div class="a th" style="top:579px">T</div><div class="a th" style="top:605px">T</div>
<div class="a" style="left:1180px;top:631px;width:32px;height:19px;border:1px solid #111;background:#d7dde4"></div>
<div class="a" style="left:1190px;top:640px;width:8px;height:4px;background:#533"></div>
<div class="a" style="left:1180px;top:632px;width:32px;height:3px;background:#bcccdc"></div>

<div class="a lt" style="top:452px;color:#fff;font-weight:bold">หรือ Save ก็ได้</div>
<div class="a lt" style="top:478px;color:#111">เสร็จแล้วให้กดFile df &gt; s...</div>
<div class="a lt" style="top:504px">Layer 2</div>
<div class="a lt" style="top:530px">จให้กดถูก</div>
<div class="a lt" style="top:556px">เมื่อขยายเสร็</div>
<div class="a lt" style="top:582px">ปยังไม่พอดีให้กด Ctrl + t...</div>
<div class="a lt" style="top:608px">.เมื่อเสร็จแล้วถ้าขนาดรู</div>
<div class="a lt" style="top:634px">Layer 1</div>
<div class="a" style="left:1152px;top:701px;width:210px;height:1px;background:#b5b5b5"></div>
<svg class="f"><g fill="none" stroke="#555" stroke-width="1.500"><rect x="1161" y="706" width="8" height="6" rx="3"/><rect x="1167" y="706" width="8" height="6" rx="3"/></g>
 <rect x="1217" y="704" width="13" height="11" fill="#ccc" stroke="#333"/><circle cx="1223.500" cy="709.500" r="3.500" fill="#fff" stroke="#333"/>
 <circle cx="1249" cy="709" r="6" fill="#fff" stroke="#333"/><path d="M1254 705l-9 9a6 6 0 0 0 9-9z" fill="#333"/><path d="M1258 714h3l-1.500 2z M1206 714h3l-1.500 2z" fill="#222"/>
 <path d="M1273 704h5l1 2h5v8h-11z" fill="#eee" stroke="#444"/><rect x="1301" y="704" width="9" height="10" fill="#eee" stroke="#444"/><path d="M1305 710l3 3" stroke="#222"/>
 <path d="M1331 706h10M1333 706v9h6v-9M1335 703h2" fill="#ddd" stroke="#333" stroke-width="1.200"/><path d="M1350 716h1M1353 716h1M1356 716h1M1359 716h1M1353 713h1M1356 713h1M1359 713h1M1356 710h1M1359 710h1" stroke="#888"/></svg>
<div class="a" style="left:1190px;top:701px;font:italic bold 15px/17px 'Liberation Serif',serif;color:#333">fx</div>

<!-- taskbar -->
<div class="a tbx"></div>
<div class="a tbtn" style="left:122px;width:58px"></div>
<div class="a tbtn" style="left:245px;width:55px"></div>
<div class="a" style="left:304px;top:730px;width:1px;height:38px;background:#8398ae"></div>
<div class="a tbtn" style="left:432px;width:58px"></div>
<div class="a tbtn" style="left:494px;width:58px;background:linear-gradient(rgba(255,255,255,.55),rgba(255,255,255,.22))"></div>
<div class="a tbtn" style="left:556px;width:57px;background:linear-gradient(rgba(255,255,255,.45),rgba(255,255,255,.18))"></div>
<svg class="f"><use href="#task" x="0" y="0"/>
 <path d="M1214 748l4-3 4 3z" fill="#eef3f8"/>
 <g fill="none" stroke="#fff" stroke-width="1.200"><path d="M1237 744h13v10h-13zM1241 757h6M1244 754v3"/><path d="M1234 741h5v5h-5z" fill="#fff"/></g>
 <path d="M1258 747h3l3-3v9l-3-3h-3z" fill="#eef3f8"/><path d="M1266 745c2 2 2 5 0 7M1269 743c3 3 3 8 0 11" fill="none" stroke="#eef3f8"/></svg>
<div class="a" style="left:1182px;top:739px;color:#f4f7fa;font-size:12px">TH</div>
<div class="a" style="left:1287px;top:734px;width:58px;text-align:center;color:#fff;font-size:12px;line-height:16px">11:16 AM<br>12/28/2012</div>
<div class="a" style="left:1352px;top:729px;width:14px;height:39px;background:linear-gradient(90deg,#8fa6bd,#c3d2e1 60%,#a6bacd);border-left:1px solid #5a6e82"></div>

<!-- dialog -->
<div class="a" style="left:398px;top:26px;width:598px;height:670px;background:#b9d1ea;border:1px solid #1b1b1b;border-right:2px solid #1da9dd;border-bottom:2px solid #1da9dd;border-radius:6px 6px 0 0"></div>
<div class="a" style="left:399px;top:27px;width:595px;height:28px;background:linear-gradient(#bccfe4,#a8c0da);border-radius:5px 5px 0 0"></div>
<div class="a" style="left:407px;top:36px;width:15px;height:15px;background:linear-gradient(#3f83d6,#0b3a78);color:#cfe2f8;font:bold 9px/15px 'Liberation Sans';text-align:center">Ps</div>
<div class="a" style="left:427px;top:37px;color:#222;font-size:11.5px">Save As</div>
<div class="a" style="left:955px;top:35px;width:32px;height:17px;background:linear-gradient(#dd8f7c,#c04a33 50%,#b33a25);border:1px solid #6c2a20;border-radius:2px;color:#fff;text-align:center;font:bold 12px/14px 'Liberation Sans'">✕</div>
<div class="a" style="left:405px;top:55px;width:583px;height:633px;background:#f0f0f0"></div>

<div class="a sx" style="left:458px;top:67px">Save in:</div>
<div class="a inp" style="left:504px;top:62px;width:261px;height:23px;border-color:#d3d3d3"></div>
<svg class="f"><path d="M511 67h4l2 2h5v13h-11z" fill="url(#fold)" stroke="#b89550"/><path d="M511 67c5 0 6 3 6 7v8l-6 0z" fill="#f1cc6a"/><path d="M753 73h8l-4 4z" fill="#111"/>
 <circle cx="788" cy="73" r="7" fill="#555"/><path d="M784 73h8M784 73l3-3M784 73l3 3" stroke="#fff" stroke-width="1.400" fill="none"/>
 <path d="M804 80v-9h4l1 1 0 8z" fill="url(#fold)" stroke="#b89550"/><path d="M811 79v-9h-3l4-5 4 5h-3v9z" fill="#36a436" stroke="#237023"/>
 <path d="M827 81l1-10h4l2 2h7l-2 8z" fill="url(#fold)" stroke="#b89550"/><path d="M841 69l-4-3m4 3l3-4m-3 4v4m0-4l4 1" stroke="#e0642a" stroke-width="1.300" fill="none"/>
 <rect x="851" y="67" width="14" height="13" fill="#fff" stroke="#2a6dc8" stroke-width="1.300"/><rect x="851" y="67" width="14" height="3" fill="#2a6dc8"/><path d="M853 72h2v2h-2zM857 72h2v2h-2zM861 72h2v2h-2zM853 76h2v2h-2zM857 76h2v2h-2zM861 76h2v2h-2z" fill="#2a6dc8"/><path d="M857 72h2v2h-2z" fill="#d04a2a"/><path d="M861 76h2v2h-2z" fill="#47a647"/>
 <path d="M867 71h7l-3.500 4z" fill="#333"/></svg>
<div class="a sx" style="left:530px;top:67px;font-size:11.5px">New folder (2)</div>

<div class="a" style="left:411px;top:91px;width:87px;height:338px;background:#f4f4f4"></div>
<div class="a" style="left:504px;top:91px;width:450px;height:283px;background:#fff"></div>
<svg class="f">
 <path d="M527 105h47l18 18v64h-65z" fill="#f5f5f5" stroke="#dadada"/><path d="M574 105v18h18z" fill="#fff" stroke="#cfcfcf"/><rect x="528" y="185" width="64" height="2" fill="#ccc"/>
 <rect x="445" y="103" width="19" height="24" fill="#eef2f7" stroke="#9aa4ae"/><circle cx="448" cy="108" r="9" fill="#dde7ef" stroke="#7a8a98"/><path d="M448 102v6l4 2" stroke="#555" fill="none"/><path d="M440 120h24l4 7-6 2h-22z" fill="#7ea6c8" stroke="#707b85"/><path d="M447 122l6-6 4 6z" fill="#3b7e3b"/>
 <rect x="438" y="162" width="31" height="23" fill="url(#scr)" stroke="#7c8590"/><rect x="439" y="181" width="29" height="3" fill="#234"/><circle cx="443" cy="182" r="1.500" fill="#6c6"/>
 <path d="M438 224v-4h30v4" fill="#f0cf72" stroke="#b09050"/><rect x="441" y="220" width="6" height="2" fill="#3c9a3a"/><rect x="449" y="220" width="5" height="2" fill="#d0402a"/><rect x="459" y="220" width="5" height="2" fill="#3a7fd0"/>
 <rect x="438" y="224" width="30" height="23" fill="url(#fold)" stroke="#c9a558"/><path d="M443 247v-9h20v9h-3v-5h-14v5z" fill="#8dcdee" stroke="#5f9cc0"/>
 <path d="M444 283l22-3v19l-22 2z" fill="url(#scr)" stroke="#40566a"/><path d="M439 286l5-3v18l-5 2z" fill="#b8bfc6" stroke="#666"/><ellipse cx="456" cy="305" rx="9" ry="2.500" fill="#ccc" stroke="#999"/><path d="M453 285l6 14 4-1v-16z" fill="#0c1f60"/>
 <circle cx="450" cy="350" r="11" fill="#3c7fd0"/><path d="M442 345c3-4 8-6 12-5-2 4-6 6-4 10-3 2-5 0-8-5zM447 357c3-2 6-1 7 2-2 2-5 2-7-2z" fill="#3a9b4a"/><path d="M452 349l17-2v14l-17 2z" fill="url(#scr)" stroke="#40566a"/><ellipse cx="459" cy="366" rx="8" ry="2" fill="#bbb"/>
</svg>
<div class="a" style="left:411px;top:131px;width:87px;text-align:center;font-size:11.5px">Recent Places</div>
<div class="a" style="left:411px;top:191px;width:87px;text-align:center;font-size:11.5px">Desktop</div>
<div class="a" style="left:411px;top:251px;width:87px;text-align:center;font-size:11.5px">Libraries</div>
<div class="a" style="left:411px;top:311px;width:87px;text-align:center;font-size:11.5px">Computer</div>
<div class="a" style="left:411px;top:371px;width:87px;text-align:center;font-size:11.5px">Network</div>
<div class="a" style="left:530px;top:198px;width:60px;text-align:center;font-size:11.5px">1.psd</div>

<div class="a sx" style="left:506px;top:388px;font-size:11.5px">File name:</div>
<div class="a inp" style="left:600px;top:384px;width:246px;height:21px;border-color:#d9d9d9"></div>
<div class="a sx" style="left:604px;top:388px;font-size:11.5px">Untitled-3.psd</div>
<div class="a" style="left:833px;top:393px;border:4px solid transparent;border-top:4px solid #111"></div>
<div class="a sx" style="left:506px;top:414px;font-size:11.5px">Format:</div>
<div class="a" style="left:600px;top:411px;width:246px;height:21px;background:linear-gradient(#e7f4fc,#bfe3f6 50%,#a5d5ef);border:1px solid #2c628b;border-radius:2px"></div>
<div class="a sx" style="left:604px;top:415px;font-size:11.5px">Photoshop (*.PSD;*.PDD)</div>
<div class="a" style="left:833px;top:420px;border:4px solid transparent;border-top:4px solid #111"></div>
<div class="a btn" style="left:880px;top:384px;width:73px;height:21px;line-height:19px;border:1px solid #3c9ac8;background:linear-gradient(#e5f2fa,#c4e0f2 50%,#9dcbe7);box-shadow:0 0 1px #3cb7e6;font-size:11.5px">Save</div>
<div class="a btn" style="left:880px;top:410px;width:73px;height:21px;line-height:19px;font-size:11.5px">Cancel</div>

<div class="a" style="left:505px;top:448px;width:446px;height:199px;border:1px solid #d9d9d9;border-radius:3px"></div>
<div class="a" style="left:510px;top:441px;background:#f0f0f0;padding:0 4px;font-size:12px">Save Options</div>
<div class="a" style="left:514px;top:457px;font-size:12px">Save:</div>
<div class="a" style="left:514px;top:518px;width:412px;height:1px;background:#aaa"></div>
<div class="a" style="left:514px;top:527px;font-size:12px">Color:</div>
<div class="a" style="left:514px;top:570px;width:412px;height:1px;background:#aaa"></div>
<div class="a" style="left:514px;top:584px;width:13px;height:13px;border:1px solid #aaa;background:#f0f0f0;color:#999;font:11px/11px 'Liberation Sans';text-align:center">✓</div>
<div class="a" style="left:531px;top:584px;color:#6d6d6d;font-size:12px">Thumbnail</div>
<div class="a" style="left:514px;top:609px;width:412px;height:28px;border:1px solid #aaa;border-bottom:0"></div>
<div class="a btn" style="left:412px;top:663px;width:108px;height:18px;line-height:16px;font-size:11.5px">Use Adobe Dialog</div>
<svg class="f"><path d="M985 685h1M982 685h1M979 685h1M985 682h1M982 682h1M985 679h1" stroke="#999"/></svg>

<!-- dropdown -->
<div class="a" style="left:600px;top:432px;width:289px;height:250px;background:#fff;border:1px solid #7a8a99"></div>
<div class="a" style="left:601px;top:433px;width:287px;height:13px;background:#3399ff"></div>
<div class="a list" style="left:600px;top:433px;width:330px">
<div style="color:#fff">Photoshop (*.PSD;*.PDD)</div>
<div>BMP (*.BMP;*.RLE;*.DIB)</div>
<div>CompuServe GIF (*.GIF)</div>
<div>Dicom (*.DCM;*.DC3;*.DIC)</div>
<div>Photoshop EPS (*.EPS)</div>
<div>Photoshop DCS 1.0 (*.EPS)</div>
<div>Photoshop DCS 2.0 (*.EPS)</div>
<div>JPEG (*.JPG;*.JPEG;*.JPE)</div>
<div>Large Document Format (*.PSB)</div>
<div>PCX (*.PCX)</div>
<div>Photoshop PDF (*.PDF;*.PDP)</div>
<div>Photoshop Raw (*.RAW)</div>
<div>PICT File (*.PCT;*.PICT)</div>
<div>Pixar (*.PXR)</div>
<div>PNG (*.PNG)</div>
<div>Portable Bit Map (*.PBM;*.PGM;*.PPM;*.PNM;*.PFM;*.PAM)</div>
<div>Scitex CT (*.SCT)</div>
<div>Targa (*.TGA;*.VDA;*.ICB;*.VST)</div>
<div>TIFF (*.TIF;*.TIFF)</div>
</div>

<!-- yellow annotations -->
<svg class="f" style="pointer-events:none"><g fill="none" stroke="#e6b00e" stroke-width="4.500" stroke-linecap="round" stroke-linejoin="round">
 <path d="M933 86C915 72 905 66 890 60C865 58 845 47 821 42C795 38 770 38 752 40C738 42 725 46 721 52C715 56 710 60 708 62C705 66 706 71 708 72C715 73 735 70 750 63"/>
 <path d="M766 163C785 165 798 172 809 180C815 195 825 208 832 220C842 238 852 250 859 260C866 280 870 295 872 313C873 330 870 342 869 353C868 370 867 385 866 400C862 408 858 415 857 420C859 430 862 438 865 445C880 442 898 436 907 427"/>
 <path d="M610 215C603 225 601 232 601 237C599 255 598 268 599 280C599 296 600 308 601 320C603 335 606 345 608 353C611 368 616 382 620 393M620 360C621 375 621 390 621 400C614 390 608 380 603 373"/>
</g></svg>
<div class="a yt" style="left:616px;top:95px;transform:scaleX(.99);transform-origin:0 50%">เข้าการเซฟแล้วให้เลือกโฟลเดอร์ที่จะเก็บ</div>
<div class="a yt" style="left:616px;top:145px;transform:scaleX(.95);transform-origin:0 50%">ชนิดของไฟล์</div>
<div class="a yt" style="left:803px;top:145px;transform:scaleX(.84);transform-origin:0 50%">(เช่น PNG JPG )</div>
<div class="a yt" style="left:615px;top:195px;transform:scaleX(.95);transform-origin:0 50%">ชื่อไฟล์</div>
<div class="a yt" style="left:616px;top:246px;transform:scaleX(.94);transform-origin:0 50%">แล้วค่อยกดSave</div>
</body></html>
